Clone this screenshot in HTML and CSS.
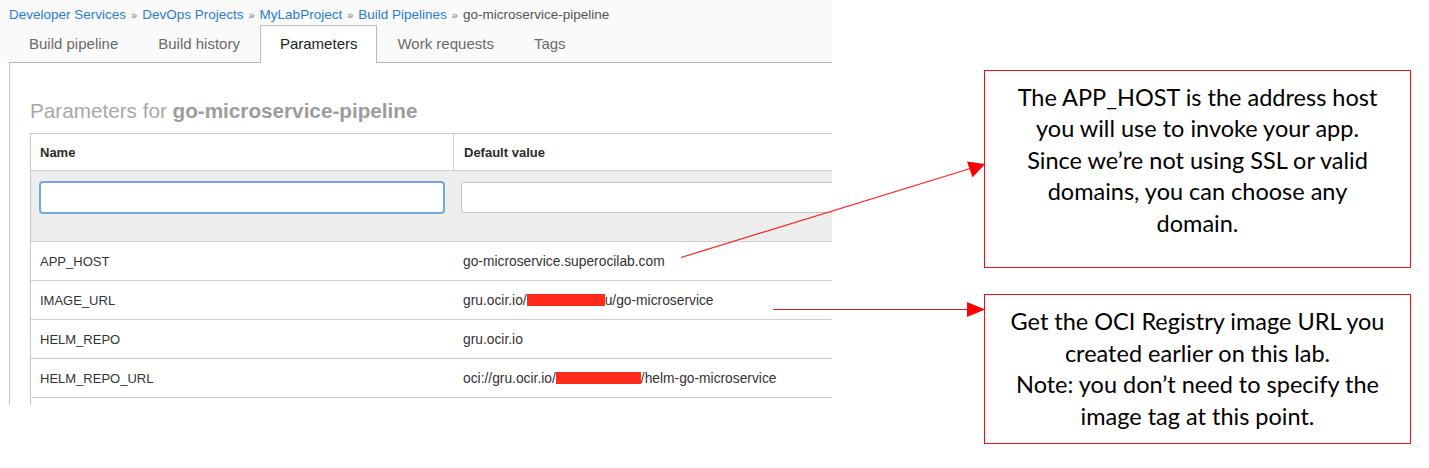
FILE: index.html
```html
<!DOCTYPE html>
<html>
<head>
<meta charset="utf-8">
<link rel="stylesheet" href="styles.css">
</head>
<body>
<div class="page">
  <div class="shot">
    <div class="topbar">
      <div class="crumbs">
        <a class="crumb">Developer Services</a><span class="sep">»</span><a class="crumb">DevOps Projects</a><span class="sep">»</span><a class="crumb">MyLabProject</a><span class="sep">»</span><a class="crumb">Build Pipelines</a><span class="sep">»</span><span class="current">go-microservice-pipeline</span>
      </div>
      <div class="tabs">
        <div class="tab">Build pipeline</div>
        <div class="tab">Build history</div>
        <div class="tab active">Parameters</div>
        <div class="tab">Work requests</div>
        <div class="tab">Tags</div>
      </div>
    </div>
    <div class="panel">
      <h2 class="title">Parameters for <b>go-microservice-pipeline</b></h2>
      <div class="table">
        <div class="row head">
          <div class="cell name">Name</div>
          <div class="cell value divider">Default value</div>
        </div>
        <div class="row filter">
          <div class="cell name"><div class="input focus"></div></div>
          <div class="cell value"><div class="input"></div></div>
        </div>
        <div class="row">
          <div class="cell name">APP_HOST</div>
          <div class="cell value">go-microservice.superocilab.com</div>
        </div>
        <div class="row">
          <div class="cell name">IMAGE_URL</div>
          <div class="cell value">gru.ocir.io/<span class="redact r1"></span>u/go-microservice</div>
        </div>
        <div class="row">
          <div class="cell name">HELM_REPO</div>
          <div class="cell value">gru.ocir.io</div>
        </div>
        <div class="row">
          <div class="cell name">HELM_REPO_URL</div>
          <div class="cell value">oci://gru.ocir.io/<span class="redact r2"></span>/helm-go-microservice</div>
        </div>
        <div class="row"></div>
      </div>
    </div>
  </div>
  <div class="notes">
    <div class="note n1">The APP_HOST is the address host<br>you will use to invoke your app.<br>Since we’re not using SSL or valid<br>domains, you can choose any<br>domain.</div>
    <div class="note n2">Get the OCI Registry image URL you<br>created earlier on this lab.<br>Note: you don’t need to specify the<br>image tag at this point.</div>
  </div>
  <svg class="arrows" width="1429" height="468" viewBox="0 0 1429 468">
    <line x1="681" y1="257.5" x2="972" y2="168" stroke="#ff2020" stroke-width="1.2"/>
    <polygon points="985,164 967,161.5 972.5,177.5" fill="#ff0000"/>
    <line x1="773" y1="309.5" x2="970" y2="309.5" stroke="#e02020" stroke-width="1.2"/>
    <polygon points="985,309.5 967,302 967,317" fill="#ff0000"/>
  </svg>
</div>
</body>
</html>
```

FILE: styles.css
```css
* { box-sizing: border-box; }
html, body { margin: 0; padding: 0; background: #fff; }
body { font-family: "Liberation Sans", Arial, sans-serif; }

.page {
  position: relative;
  width: 1429px;
  height: 468px;
  display: flex;
  align-items: flex-start;
  overflow: hidden;
}

.shot {
  width: 832px;
  height: 405px;
  flex: none;
  overflow: hidden;
  display: flex;
  flex-direction: column;
}

.topbar {
  background: #fafafa;
  height: 63px;
  flex: none;
  display: flex;
  flex-direction: column;
}

.crumbs {
  height: 25px;
  padding: 7px 0 0 9px;
  font-size: 13.5px;
  line-height: 16px;
  white-space: nowrap;
}
.crumb { color: #2b7ad0; }
.sep { color: #777; margin: 0 5px; font-size: 11px; }
.current { color: #555; }

.tabs {
  display: flex;
  height: 38px;
  margin-left: 9px;
  border-bottom: 1px solid #b5b5b5;
}
.tab {
  padding: 0 19px;
  height: 37px;
  line-height: 36px;
  font-size: 15px;
  color: #6a6a6a;
  border: 1px solid transparent;
  border-bottom: none;
}
.tab.active {
  background: #fff;
  color: #222;
  border-color: #bdbdbd;
  height: 38px;
  margin-bottom: -1px;
}

.panel {
  flex: 1;
  margin-left: 9px;
  border-left: 1px solid #c4c4c4;
  background: #fff;
  padding: 36px 0 0 20px;
}

.title {
  margin: 0;
  height: 34px;
  font-size: 20.7px;
  font-weight: normal;
  line-height: 24px;
  color: #a8a8a8;
  white-space: nowrap;
}
.title b { font-weight: bold; color: #9c9c9c; }

.table {
  width: 830px;
  border-left: 1px solid #c8c8c8;
  border-top: 1px solid #c8c8c8;
}
.row {
  display: flex;
  height: 39px;
  border-bottom: 1px solid #cdcdcd;
  font-size: 13px;
  color: #333;
  align-items: center;
}
.cell.name { width: 422px; padding-left: 9px; flex: none; }
.cell.value { flex: 1; padding-left: 10px; white-space: nowrap; font-size: 13.8px; }
.row.head { height: 37px; font-weight: bold; color: #2b2b2b; }
.row.head .cell { height: 100%; display: flex; align-items: center; }
.row.head .cell.value { font-size: 13px; }
.cell.divider { border-left: 1px solid #cfcfcf; }

.row.filter {
  height: 71px;
  background: #eeeeee;
  align-items: flex-start;
  padding-top: 10px;
}
.row.filter .cell.name { padding-left: 8px; padding-right: 8px; }
.row.filter .cell.value { padding-left: 8px; }
.input {
  height: 33px;
  background: #fff;
  border: 1px solid #c4c4c4;
  border-radius: 3px;
}
.input.focus {
  border: 2px solid #72a8e2;
  border-radius: 4px;
}
.row.filter .cell.value .input { margin-top: 1px; height: 31px; width: 400px; }

.redact {
  display: inline-block;
  background: #ff2a1a;
  height: 12px;
  vertical-align: -1px;
}
.r1 { width: 78px; }
.r2 { width: 85px; }

.notes {
  display: flex;
  flex-direction: column;
  gap: 26px;
  margin-left: 152px;
  margin-top: 70px;
}
.note {
  width: 427px;
  border: 1px solid #ee1111;
  font-family: "Lato", "Open Sans", sans-serif;
  font-size: 23.5px;
  line-height: 31.6px;
  color: #000;
  text-align: center;
}
.n1 { height: 198px; padding-top: 10.5px; }
.n2 { height: 150px; padding-top: 11px; }

.arrows {
  position: absolute;
  left: 0;
  top: 0;
  pointer-events: none;
}
```
